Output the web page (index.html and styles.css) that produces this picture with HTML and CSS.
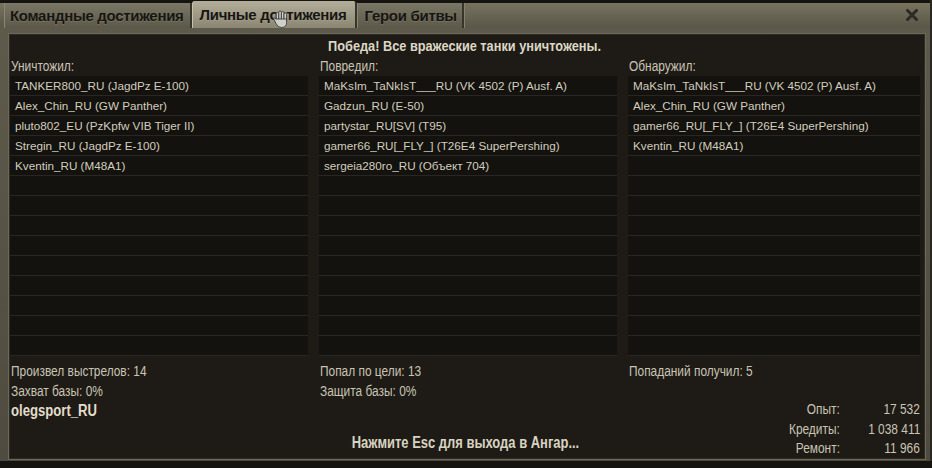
FILE: index.html
```html
<!DOCTYPE html>
<html lang="ru">
<head>
<meta charset="utf-8">
<title>Итоги боя</title>
<link rel="stylesheet" href="styles.css">
</head>
<body>
<div class="window">
  <div class="tabbar">
    <div class="tab first">Командные достижения</div>
    <div class="tab active">Личные достижения
      <svg class="cursor" width="16" height="19" viewBox="0 0 16 19">
        <g fill="#cfcfcb" stroke="#3a3936" stroke-width="0.9">
          <rect x="3.2" y="2.5" width="2.6" height="9" rx="1.3"/>
          <rect x="5.8" y="1" width="2.6" height="10" rx="1.3"/>
          <rect x="8.4" y="1.5" width="2.6" height="10" rx="1.3"/>
          <rect x="11" y="3" width="2.6" height="9" rx="1.3"/>
          <path d="M3 9 L1.2 7.8 Q0.2 7.6 0.6 8.8 L3 13.5 Q4.5 17.5 8.5 17.5 Q13.6 17.5 13.6 12.5 L13.6 9 L3 9 Z"/>
        </g>
      </svg>
    </div>
    <div class="tab last">Герои битвы</div>
    <div class="spacer"></div>
    <div class="close">
      <svg width="12" height="12" viewBox="0 0 12 12"><path d="M1.5 1.5 L10.5 10.5 M10.5 1.5 L1.5 10.5" stroke="#2c2a25" stroke-width="3" stroke-linecap="square"/></svg>
    </div>
  </div>
  <div class="panel">
    <div class="title"><span class="cn mid">Победа! Все вражеские танки уничтожены.</span></div>
    <div class="cols">
      <div class="col">
        <div class="col-head"><span class="cn">Уничтожил:</span></div>
        <ul class="list">
          <li>TANKER800_RU (JagdPz E-100)</li>
          <li>Alex_Chin_RU (GW Panther)</li>
          <li>pluto802_EU (PzKpfw VIB Tiger II)</li>
          <li>Stregin_RU (JagdPz E-100)</li>
          <li>Kventin_RU (M48A1)</li>
          <li></li><li></li><li></li><li></li><li></li><li></li><li></li><li></li><li></li>
        </ul>
        <div class="stats">
          <div><span class="cn">Произвел выстрелов: 14</span></div>
          <div><span class="cn">Захват базы: 0%</span></div>
        </div>
      </div>
      <div class="col">
        <div class="col-head"><span class="cn">Повредил:</span></div>
        <ul class="list">
          <li>MaKsIm_TaNkIsT___RU (VK 4502 (P) Ausf. A)</li>
          <li>Gadzun_RU (E-50)</li>
          <li>partystar_RU[SV] (T95)</li>
          <li>gamer66_RU[_FLY_] (T26E4 SuperPershing)</li>
          <li>sergeia280ro_RU (Объект 704)</li>
          <li></li><li></li><li></li><li></li><li></li><li></li><li></li><li></li><li></li>
        </ul>
        <div class="stats">
          <div><span class="cn">Попал по цели: 13</span></div>
          <div><span class="cn">Защита базы: 0%</span></div>
        </div>
      </div>
      <div class="col">
        <div class="col-head"><span class="cn">Обнаружил:</span></div>
        <ul class="list">
          <li>MaKsIm_TaNkIsT___RU (VK 4502 (P) Ausf. A)</li>
          <li>Alex_Chin_RU (GW Panther)</li>
          <li>gamer66_RU[_FLY_] (T26E4 SuperPershing)</li>
          <li>Kventin_RU (M48A1)</li>
          <li></li><li></li><li></li><li></li><li></li><li></li><li></li><li></li><li></li><li></li>
        </ul>
        <div class="stats">
          <div><span class="cn">Попаданий получил: 5</span></div>
        </div>
      </div>
    </div>
    <div class="footer">
      <div class="player"><span class="cn">olegsport_RU</span></div>
      <div class="esc"><span class="cn mid">Нажмите Esc для выхода в Ангар...</span></div>
      <div class="rewards">
        <span class="lbl"><span class="cn end">Опыт:</span></span><span class="val"><span class="cn end">17 532</span></span>
        <span class="lbl"><span class="cn end">Кредиты:</span></span><span class="val"><span class="cn end">1 038 411</span></span>
        <span class="lbl"><span class="cn end">Ремонт:</span></span><span class="val"><span class="cn end">11 966</span></span>
      </div>
    </div>
  </div>
</div>
</body>
</html>
```

FILE: styles.css
```css
* { box-sizing: border-box; }
html, body { margin: 0; padding: 0; }
body {
  width: 932px;
  height: 468px;
  background: #161410;
  overflow: hidden;
  font-family: "Liberation Sans", Arial, sans-serif;
}
.cn {
  display: inline-block;
  white-space: nowrap;
  transform: scaleX(0.85);
  transform-origin: 0 50%;
}
.cn.mid { transform-origin: 50% 50%; }
.cn.end { transform-origin: 100% 50%; }
.window {
  height: 461px;
  background: linear-gradient(#5f5b4c, #4f4b40);
  display: flex;
  flex-direction: column;
  padding: 0 4px 3px 8px;
  border-right: 2px solid #2a2822;
}
.tabbar {
  height: 28px;
  margin: 0 -4px 0 -8px;
  padding: 3px 0 0 4px;
  display: flex;
  align-items: flex-end;
  background: linear-gradient(#161410 0, #161410 3px, #77735f 3px, #5a5648 28px);
}
.tab {
  position: relative;
  height: 25px;
  padding: 0 7px 0 8px;
  display: flex;
  align-items: center;
  font-weight: bold;
  font-size: 15px;
  letter-spacing: -0.3px;
  color: #171612;
  text-shadow: 0 1px 0 rgba(200,195,170,0.2);
  background: linear-gradient(#7b7765, #5d594a);
  border-right: 2px solid #37342d;
  border-left: 1px solid #8a8674;
  white-space: nowrap;
}
.tab.first { padding: 0 6px 0 5px; }
.tab.last { padding: 0 5px 0 7px; }
.tab.active {
  height: 27px;
  margin-top: -2px;
  background: linear-gradient(#b3ae99, #8b8673);
  border-radius: 3px 3px 0 0;
  border-left: 1px solid #c6c1ac;
  padding: 0 8px 0 7px;
}
.cursor {
  position: absolute;
  left: 80px;
  top: 9px;
}
.spacer { flex: 1; border-left: 1px solid #858170; height: 25px; }
.close {
  width: 32px;
  height: 25px;
  display: flex;
  align-items: center;
  justify-content: center;
  padding: 0 4px 2px 0;
}
.panel {
  margin-top: 5px;
  flex: 1;
  background: #1e1b17;
  border: 1px solid #6c6857;
  box-shadow: inset 0 0 0 1px #2f2c26;
  padding: 2px 5px 0 1px;
  display: flex;
  flex-direction: column;
  color: #c9c4b3;
}
.title {
  height: 20px;
  line-height: 20px;
  text-align: center;
  font-weight: bold;
  font-size: 15px;
  color: #dcd7c4;
}
.cols {
  display: grid;
  grid-template-columns: 298px 298px 292px;
  column-gap: 11px;
}
.col-head {
  height: 20px;
  line-height: 20px;
  padding-left: 1px;
  font-size: 14px;
  color: #c9c4b3;
}
.list {
  list-style: none;
  margin: 0;
  padding: 0;
  background: #14120f;
}
.list li {
  height: 20px;
  line-height: 20px;
  padding-left: 5px;
  border-bottom: 1px solid #2a2722;
  font-size: 11.7px;
  color: #d2cdbd;
  white-space: nowrap;
  overflow: hidden;
}
.stats {
  padding: 5px 0 0 1px;
  font-size: 14px;
  line-height: 20px;
  color: #c9c4b3;
}
.footer {
  flex: 1;
  display: grid;
  grid-template-columns: 1fr auto 1fr;
  align-items: start;
  margin-top: 0;
}
.player {
  padding-left: 1px;
  line-height: 20px;
  font-weight: bold;
  font-size: 16px;
  color: #e2ddca;
}
.player .cn { transform: scaleX(0.82); }
.esc {
  align-self: end;
  margin-bottom: 6px;
  line-height: 20px;
  font-weight: bold;
  font-size: 16px;
  color: #d8d3c0;
}
.esc .cn { transform: scaleX(0.81); }
.rewards {
  justify-self: end;
  display: grid;
  grid-template-columns: auto 70px;
  column-gap: 10px;
  font-size: 14px;
  line-height: 19.5px;
  color: #c9c4b3;
  margin-top: -1px;
}
.rewards > span { text-align: right; }
```
